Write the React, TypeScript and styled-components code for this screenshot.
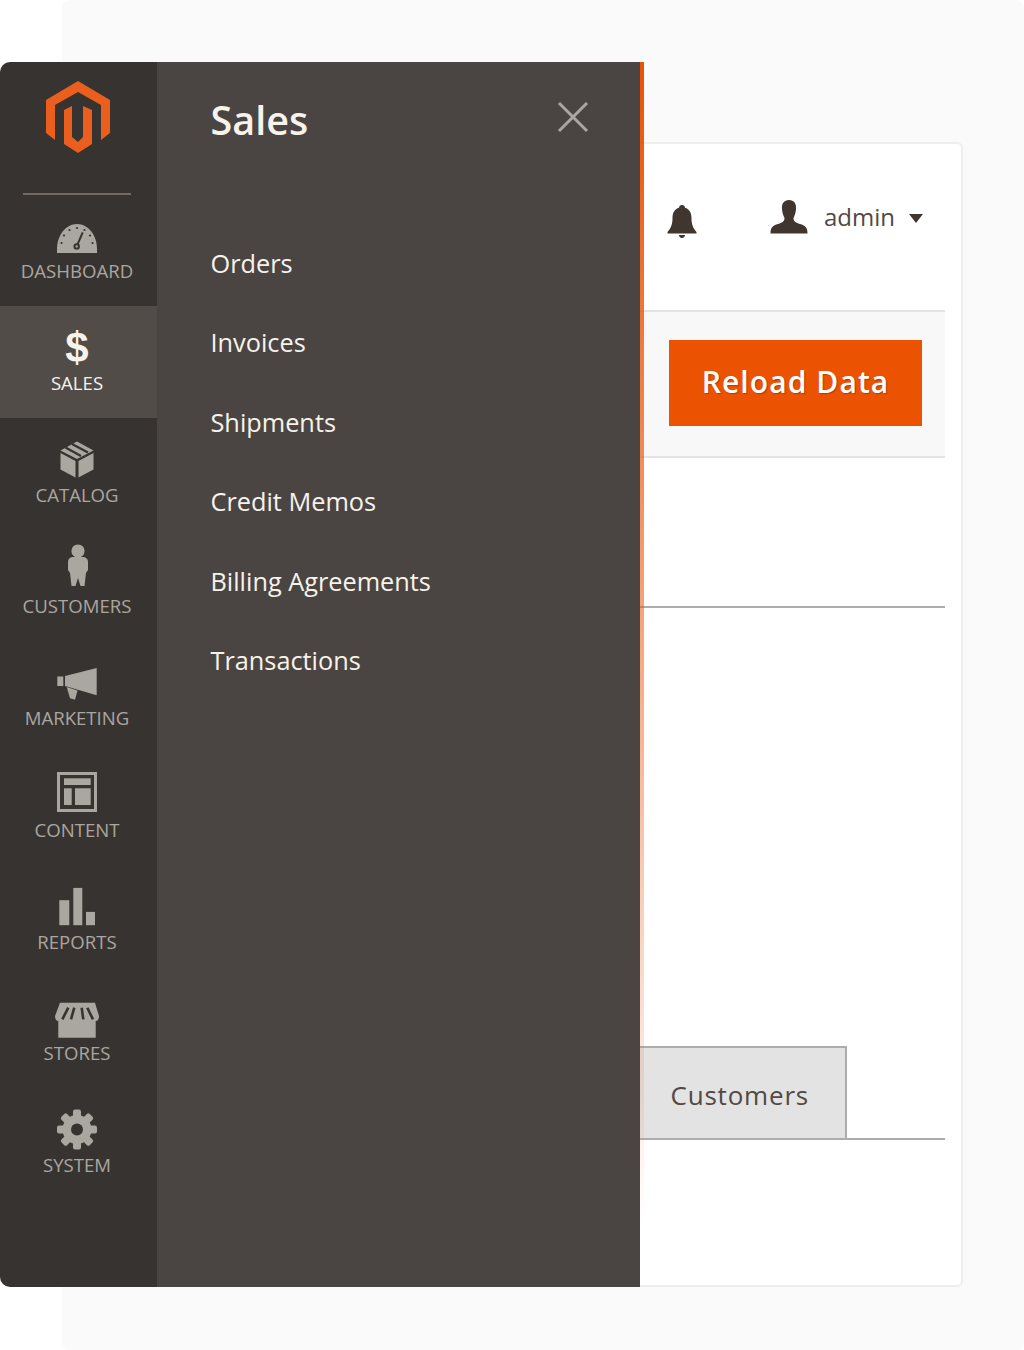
import styled, { createGlobalStyle } from "styled-components";

const GlobalStyle = createGlobalStyle`
  html, body {
    margin: 0;
    padding: 0;
    background: #ffffff;
    font-family: "Open Sans", "Liberation Sans", sans-serif;
  }
`;

const Page = styled.div`
  position: relative;
  width: 1024px;
  height: 1350px;
  overflow: hidden;
`;

const Backdrop = styled.div`
  box-sizing: border-box;
  margin-left: 62px;
  height: 1350px;
  padding: 142px 61px 0 40px;
  background: #fafafa;
  border-radius: 8px;
`;

const Card = styled.section`
  box-sizing: border-box;
  height: 1145px;
  padding-right: 16px;
  background: #ffffff;
  border: 2px solid #eeeeee;
  border-radius: 6px;
`;

const Header = styled.header`
  display: flex;
  align-items: flex-start;
  justify-content: flex-end;
  height: 166px;
  padding-right: 22px;
`;

const Bell = styled.svg`
  width: 30px;
  height: 33px;
  margin: 61px 73px 0 0;
`;

const Person = styled.svg`
  width: 38px;
  height: 34px;
  margin: 56px 16px 0 0;
`;

const UserName = styled.span`
  margin-top: 57px;
  font-size: 24px;
  line-height: 32px;
  color: #514943;
`;

const Caret = styled.span`
  width: 0;
  height: 0;
  margin: 70px 0 0 14px;
  border-top: 9px solid #41362f;
  border-left: 7.5px solid transparent;
  border-right: 7.5px solid transparent;
`;

const Toolbar = styled.div`
  box-sizing: border-box;
  display: flex;
  align-items: center;
  justify-content: flex-end;
  height: 148px;
  padding: 0 23px 2px 0;
  background: #f8f8f8;
  border-top: 2px solid #e3e3e3;
  border-bottom: 2px solid #e3e3e3;
`;

const ReloadButton = styled.button`
  width: 253px;
  height: 86px;
  padding: 0 0 4px;
  border: 0;
  background: #eb5202;
  color: #ffffff;
  font-family: inherit;
  font-size: 30px;
  font-weight: 600;
  letter-spacing: 1.1px;
  text-shadow: 1px 1px 1px rgba(0, 0, 0, 0.25);
`;

const Section = styled.div`
  box-sizing: border-box;
  height: 150px;
  border-bottom: 2px solid #adadad;
`;

const TabRow = styled.div`
  box-sizing: border-box;
  display: flex;
  height: 94px;
  margin-top: 438px;
  padding-left: 440px;
  border-bottom: 2px solid #adadad;
`;

const Tab = styled.div`
  box-sizing: border-box;
  display: flex;
  align-items: center;
  justify-content: flex-end;
  width: 303px;
  height: 94px;
  padding: 3px 36px 0 0;
  background: #e3e3e3;
  border: 2px solid #adadad;
  font-size: 26px;
  letter-spacing: 0.8px;
  color: #514943;
`;

/* the open menu lies over the page */
const Overlay = styled.div`
  position: absolute;
  top: 62px;
  left: 0;
  display: flex;
  height: 1225px;
`;

const Sidebar = styled.nav`
  width: 157px;
  background: #373330;
  border-radius: 10px 0 0 10px;
`;

const LogoBox = styled.div`
  box-sizing: border-box;
  height: 131px;
  padding: 18px 0 0 45px;
`;

const Divider = styled.div`
  height: 2px;
  margin: 0 26px -1px 23px;
  background: #736a63;
`;

const NavItem = styled.a<{ $active?: boolean }>`
  box-sizing: border-box;
  display: flex;
  flex-direction: column;
  align-items: center;
  height: 111.75px;
  padding: 20px 3px 0 0;
  background: ${(p) => (p.$active ? "#514c48" : "transparent")};
  color: ${(p) => (p.$active ? "#f7f3eb" : "#aaa6a0")};
`;

const IconBox = styled.svg`
  width: 40px;
  height: 40px;
  overflow: visible;
  fill: #aaa6a0;
`;

const DollarBox = styled.span`
  height: 40px;
  font-family: "Liberation Sans", sans-serif;
  font-size: 42px;
  font-weight: 700;
  line-height: 44px;
  color: #f7f3eb;
`;

const NavLabel = styled.span`
  margin-top: 6px;
  font-size: 18.6px;
  line-height: 22px;
  white-space: nowrap;
`;

const Submenu = styled.div`
  box-sizing: border-box;
  width: 483px;
  padding: 30px 51px 0 53.5px;
  background: #4a4542;
`;

const SubmenuHead = styled.div`
  display: flex;
  align-items: flex-start;
  justify-content: space-between;
  height: 151px;
`;

const SubmenuTitle = styled.h2`
  margin: 0;
  font-size: 39.5px;
  font-weight: 600;
  line-height: 56px;
  color: #f7f3eb;
`;

const CloseIcon = styled.svg`
  width: 32px;
  height: 32px;
  margin-top: 9px;
  stroke: #aaa6a0;
  stroke-width: 3;
  fill: none;
`;

const SubmenuList = styled.ul`
  display: flex;
  flex-direction: column;
  gap: 39.4px;
  margin: 0;
  padding: 0;
  list-style: none;
`;

const SubmenuLink = styled.li`
  font-size: 25.3px;
  line-height: 40px;
  color: #f7f3eb;
`;

const EdgeStrip = styled.div`
  width: 4px;
  background: linear-gradient(to bottom, #eb5202 0%, rgba(235, 82, 2, 0) 95%);
`;

const GaugeIcon = () => (
  <IconBox viewBox="0 0 40 40">
    <path d="M0 39 V35 C0 21 9 10 20 10 C31 10 40 21 40 35 V39 Z" />
    <path d="M19.7 32.4 L25.7 18.4" stroke="#373330" strokeWidth="2" fill="none" />
    <circle cx="19.7" cy="32.4" r="3.2" fill="#373330" />
    <circle cx="19.7" cy="32.4" r="1.2" />
    <g fill="#373330">
      <circle cx="20" cy="14" r="1.1" />
      <circle cx="12.5" cy="16" r="1.1" />
      <circle cx="7" cy="21.5" r="1.1" />
      <circle cx="4.5" cy="29" r="1.1" />
      <circle cx="27.5" cy="16" r="1.1" />
      <circle cx="33" cy="21.5" r="1.1" />
      <circle cx="35.5" cy="29" r="1.1" />
    </g>
  </IconBox>
);

const BoxIcon = () => (
  <IconBox viewBox="0 0 40 40">
    <path d="M3.5 15 L18.5 23 V39.5 L3.5 31.5 Z" />
    <path d="M21.5 23 L36.5 15 V31.5 L21.5 39.5 Z" />
    <path d="M3.5 12.5 L20 3.5 L36.5 12.5 L20 21 Z" />
    <path d="M8.5 9.5 L24 18 M15 6 L31 14.5" stroke="#373330" strokeWidth="2.4" fill="none" />
  </IconBox>
);

const CustomerIcon = () => (
  <IconBox viewBox="0 0 40 40">
    <circle cx="21" cy="2" r="6.6" />
    <path d="M15 8 H27 Q31 9 31 13 V21 L29 24 L27.5 37 H23.5 L21 29 L18.5 37 H14.5 L13 24 L11 21 V13 Q11 9 15 8 Z" />
  </IconBox>
);

const MegaphoneIcon = () => (
  <IconBox viewBox="0 0 40 40">
    <rect x="0.3" y="15.5" width="6" height="9.5" />
    <path d="M8 15 L39.7 7 V34.2 L8 25 Z" />
    <path d="M9.7 26 L20.5 29.5 L18 38.8 L13 37.2 Z" />
  </IconBox>
);

const ContentIcon = () => (
  <IconBox viewBox="0 0 40 40">
    <path fillRule="evenodd" d="M0 -1 H40 V39 H0 Z M3 2 V36 H37 V2 Z" />
    <rect x="7" y="5.3" width="26.7" height="6.7" />
    <rect x="7" y="15.3" width="7.7" height="16.7" />
    <rect x="18" y="15.3" width="15.7" height="16.7" />
  </IconBox>
);

const ReportsIcon = () => (
  <IconBox viewBox="0 0 40 40">
    <rect x="2.3" y="15.2" width="10" height="25" />
    <rect x="16.3" y="2.9" width="9" height="37.3" />
    <rect x="29" y="26.9" width="9" height="13.3" />
  </IconBox>
);

const StoreIcon = () => (
  <IconBox viewBox="0 0 40 40">
    <path d="M3 6.7 H38 L42 20 Q42 25 38.5 25 H38.7 V41.7 H1.3 V25 H1.5 Q-2 25 -2 20 Z" />
    <path
      d="M11.3 11.7 L5.3 23.4 M17.3 11.7 L14 23.4 M24.7 11.7 L26.3 23.4 M30.3 11.7 L36 23.4"
      stroke="#373330"
      strokeWidth="2.6"
      fill="none"
    />
  </IconBox>
);

const GearIcon = () => (
  <IconBox viewBox="0 0 40 40">
    <g transform="translate(20 21.6)">
      <circle r="14.5" />
      {[0, 45, 90, 135, 180, 225, 270, 315].map((deg) => (
        <rect key={deg} x="-4" y="-20" width="8" height="9" rx="2" transform={`rotate(${deg})`} />
      ))}
      <circle r="6" fill="#373330" />
    </g>
  </IconBox>
);

const navItems = [
  { label: "DASHBOARD", icon: <GaugeIcon /> },
  { label: "SALES", icon: <DollarBox>$</DollarBox>, active: true },
  { label: "CATALOG", icon: <BoxIcon /> },
  { label: "CUSTOMERS", icon: <CustomerIcon /> },
  { label: "MARKETING", icon: <MegaphoneIcon /> },
  { label: "CONTENT", icon: <ContentIcon /> },
  { label: "REPORTS", icon: <ReportsIcon /> },
  { label: "STORES", icon: <StoreIcon /> },
  { label: "SYSTEM", icon: <GearIcon /> },
];

const salesLinks = ["Orders", "Invoices", "Shipments", "Credit Memos", "Billing Agreements", "Transactions"];

const App = () => {
  return (
    <Page>
      <GlobalStyle />
      <Backdrop>
        <Card>
          <Header>
            <Bell viewBox="0 0 30 33">
              <path
                fill="#41362f"
                d="M15 0 C17 0 18 1.2 18 2.8 C22.5 4 24.5 8 24.5 13 C24.5 19 26 23 29.5 27 V28.5 H0.5 V27 C4 23 5.5 19 5.5 13 C5.5 8 7.5 4 12 2.8 C12 1.2 13 0 15 0 Z M12 30 H18 C18 32 16.5 33 15 33 C13.5 33 12 32 12 30 Z"
              />
            </Bell>
            <Person viewBox="0 0 38 34">
              <path
                fill="#41362f"
                d="M19 0 C24 0 26.5 3.5 26 9 C25.8 13 24.5 16 23.5 18 C23.5 21 25 22.5 30 24 C35 25.5 37.5 27 37.5 33.5 H0.5 C0.5 27 3 25.5 8 24 C13 22.5 14.5 21 14.5 18 C13.5 16 12.2 13 12 9 C11.5 3.5 14 0 19 0 Z"
              />
            </Person>
            <UserName>admin</UserName>
            <Caret />
          </Header>
          <Toolbar>
            <ReloadButton>Reload Data</ReloadButton>
          </Toolbar>
          <Section />
          <TabRow>
            <Tab>Customers</Tab>
          </TabRow>
        </Card>
      </Backdrop>

      <Overlay>
        <Sidebar>
          <LogoBox>
            <svg width="66" height="74" viewBox="45 80 66 74">
              <path fill="#eb5f1e" d="M78 81 L110 100 V133 L101 140 V105 L78 92 L55 105 V140 L46 133 V100 Z" />
              <path fill="#eb5f1e" d="M64 110 L72 106 V137 L78 142 L83 137 V106 L92 110 V144 L78 153 L64 144 Z" />
            </svg>
          </LogoBox>
          <Divider />
          {navItems.map((item) => (
            <NavItem key={item.label} $active={item.active}>
              {item.icon}
              <NavLabel>{item.label}</NavLabel>
            </NavItem>
          ))}
        </Sidebar>
        <Submenu>
          <SubmenuHead>
            <SubmenuTitle>Sales</SubmenuTitle>
            <CloseIcon viewBox="0 0 32 32">
              <path d="M2 2 L30 30 M30 2 L2 30" />
            </CloseIcon>
          </SubmenuHead>
          <SubmenuList>
            {salesLinks.map((link) => (
              <SubmenuLink key={link}>{link}</SubmenuLink>
            ))}
          </SubmenuList>
        </Submenu>
        <EdgeStrip />
      </Overlay>
    </Page>
  );
};

export default App;
